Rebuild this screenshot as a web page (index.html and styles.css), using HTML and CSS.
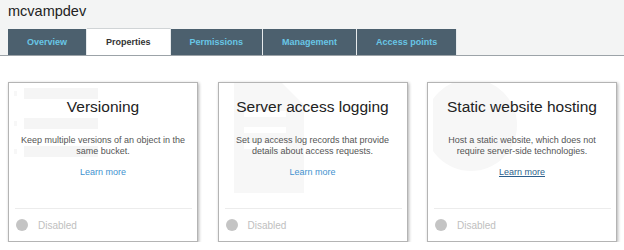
FILE: index.html
```html
<!DOCTYPE html>
<html lang="en">
<head>
    <meta charset="UTF-8">
    <title>mcvampdev - Properties</title>
    <link rel="stylesheet" href="styles.css">
</head>
<body>
    <div class="header">
        <h1>mcvampdev</h1>
        <div class="tabs">
            <a class="tab">Overview</a>
            <a class="tab active">Properties</a>
            <a class="tab">Permissions</a>
            <a class="tab">Management</a>
            <a class="tab">Access points</a>
        </div>
    </div>

    <div class="cards">
        <div class="card">
            <svg class="watermark" width="110" height="110" viewBox="0 0 110 110">
                <rect x="10" y="5" width="74" height="11" fill="#f5f5f5"/>
                <rect x="10" y="35" width="74" height="11" fill="#f5f5f5"/>
                <rect x="10" y="63" width="74" height="11" fill="#f5f5f5"/>
                <rect x="-2" y="8" width="5" height="5" fill="#f7f7f7"/>
                <rect x="-2" y="38" width="5" height="5" fill="#f7f7f7"/>
                <rect x="-2" y="66" width="5" height="5" fill="#f7f7f7"/>
            </svg>
            <div class="card-body">
                <h2>Versioning</h2>
                <p>Keep multiple versions of an object in the same bucket.</p>
                <a class="learn">Learn more</a>
            </div>
            <div class="card-foot">
                <span class="dot"></span>
                <span class="status">Disabled</span>
            </div>
        </div>

        <div class="card">
            <svg class="watermark" width="110" height="110" viewBox="0 0 110 110">
                <path d="M10 0 H58 L80 22 V110 H10 Z" fill="#f7f7f7"/>
                <rect x="20" y="28" width="42" height="6" fill="#fff"/>
                <rect x="20" y="44" width="42" height="6" fill="#fff"/>
                <rect x="20" y="60" width="42" height="6" fill="#fff"/>
            </svg>
            <div class="card-body">
                <h2>Server access logging</h2>
                <p>Set up access log records that provide details about access requests.</p>
                <a class="learn">Learn more</a>
            </div>
            <div class="card-foot">
                <span class="dot"></span>
                <span class="status">Disabled</span>
            </div>
        </div>

        <div class="card">
            <svg class="watermark" width="110" height="110" viewBox="0 0 110 110">
                <circle cx="38" cy="42" r="46" fill="#f7f7f7"/>
            </svg>
            <div class="card-body">
                <h2>Static website hosting</h2>
                <p>Host a static website, which does not require server-side technologies.</p>
                <a class="learn visited">Learn more</a>
            </div>
            <div class="card-foot">
                <span class="dot"></span>
                <span class="status">Disabled</span>
            </div>
        </div>
    </div>
</body>
</html>
```

FILE: styles.css
```css
body {
    font-family: "Liberation Sans", Arial, Helvetica, sans-serif;
    background-color: #fff;
    color: #222;
    margin: 0;
    padding: 0;
}
.header {
    background-color: #f3f4f4;
    padding: 3px 8px 0;
    border-bottom: 1px solid #9ca3a8;
}
h1 {
    font-size: 14.5px;
    font-weight: normal;
    line-height: 17px;
    margin: 0 0 9px;
    color: #222;
}
.tabs {
    display: flex;
}
.tab {
    display: block;
    height: 26px;
    line-height: 26px;
    padding: 0 19px;
    font-size: 9px;
    font-weight: bold;
    background-color: #4c606e;
    color: #68c6e6;
    border-right: 1px solid #e6eaec;
}
.tab.active {
    background-color: #fff;
    color: #333;
    border-top: 1px solid #d0d4d6;
    margin-top: -1px;
}
.cards {
    display: flex;
    justify-content: space-between;
    padding: 26px 7px 0 8px;
}
.card {
    position: relative;
    width: 190px;
    height: 160px;
    box-sizing: border-box;
    border: 1px solid #b4b4b4;
    box-shadow: 1px 1px 3px rgba(0, 0, 0, 0.3);
    background-color: #fff;
    display: flex;
    flex-direction: column;
    overflow: hidden;
}
.watermark {
    position: absolute;
    left: 5px;
    top: 0;
}
.card-body {
    position: relative;
    padding: 14px 10px 0;
    text-align: center;
}
.card-body h2 {
    font-size: 15.5px;
    font-weight: normal;
    line-height: 19px;
    margin: 0 0 19px;
    color: #222;
}
.card-body p {
    font-size: 9px;
    line-height: 11px;
    color: #555;
    margin: 0 0 10px;
}
.learn {
    display: block;
    font-size: 9px;
    line-height: 11px;
    color: #3f92cf;
}
.learn.visited {
    color: #2d5f8c;
    text-decoration: underline;
}
.card-foot {
    position: relative;
    margin: auto 5px 0 6px;
    height: 32px;
    border-top: 1px solid #ececec;
    display: flex;
    align-items: center;
}
.dot {
    width: 12px;
    height: 12px;
    border-radius: 50%;
    background-color: #c4c4c4;
    margin: 0 10px 0 1px;
}
.status {
    font-size: 10px;
    color: #c0c0c0;
}
```
